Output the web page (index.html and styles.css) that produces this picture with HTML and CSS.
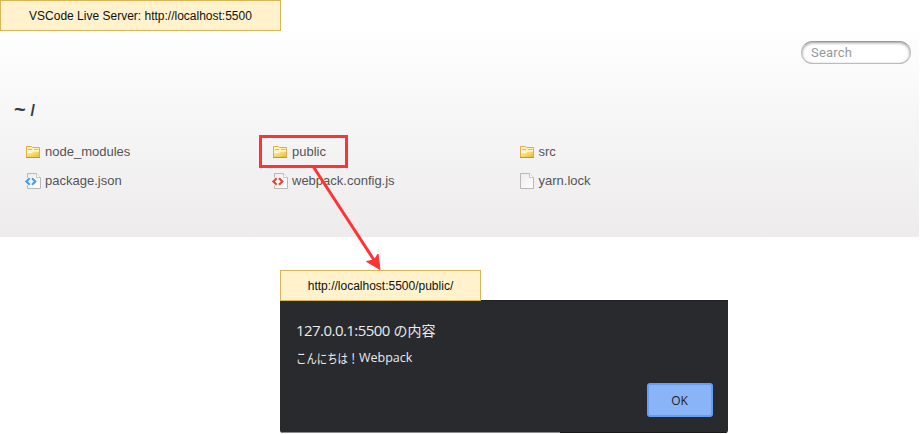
FILE: index.html
```
<!DOCTYPE html>
<html lang="ja">
<head>
<meta charset="utf-8">
<title>Live Server</title>
<link rel="stylesheet" href="styles.css">
</head>
<body>
<svg class="defs" width="0" height="0" aria-hidden="true">
  <defs>
    <linearGradient id="gold" x1="0" y1="0" x2="1" y2="1"><stop offset="0" stop-color="#fff3a8"/><stop offset="1" stop-color="#edbc35"/></linearGradient>
    <linearGradient id="paper" x1="0" y1="0" x2="1" y2="1"><stop offset="0" stop-color="#ececec"/><stop offset="1" stop-color="#ffffff"/></linearGradient>
    <symbol id="folder" viewBox="0 0 16 16">
      <path d="M1.5 13.5v-11h5l1 1h7v10z" fill="#fff4b5" stroke="#e0ad4c"/>
      <path d="M3 5.5h4M9 5.5h4.5" stroke="#e4ba55"/>
      <path d="M2 13V8.5h5L8.500 7H14v6z" fill="url(#gold)"/>
      <path d="M2 8.500h5l1.5-1.5H14" fill="none" stroke="#fffbd8"/>
      <path d="M1 13.5h14" stroke="#c9932f"/>
    </symbol>
    <symbol id="file" viewBox="0 0 16 16">
      <path d="M1.500.5H10.500l4 4v11h-13z" fill="url(#paper)" stroke="#b8b8b8" stroke-linejoin="round"/>
      <path d="M10.500.5v4h4" fill="#fff" stroke="#c5c5c5"/>
    </symbol>
    <symbol id="code" viewBox="0 0 16 16">
      <path d="M2.5.5H11.500l4 4v11h-13z" fill="url(#paper)" stroke="#b8b8b8" stroke-linejoin="round"/>
      <path d="M11.500.5v4h4" fill="#fff" stroke="#c5c5c5"/>
      <path d="M4.700 5L1.200 8.500l3.500 3.500M7 5l3.500 3.500L7 12" fill="none" stroke="#fff" stroke-width="3.6"/>
      <path d="M4.700 5.200L1.400 8.500l3.300 3.300M7 5.200l3.300 3.300L7 11.800" fill="none" stroke="currentColor" stroke-width="2.2"/>
    </symbol>
  </defs>
</svg>
<main class="listing">
  <div class="note note-server">VSCode Live Server: http://localhost:5500</div>
  <input class="search" type="text" placeholder="Search" aria-label="Search">
  <h1 class="path"><span class="tilde">~</span> /</h1>
  <ul class="files">
    <li><svg class="icon"><use href="#folder"/></svg>node_modules</li>
    <li><svg class="icon"><use href="#folder"/></svg>public</li>
    <li><svg class="icon"><use href="#folder"/></svg>src</li>
    <li><svg class="icon blue"><use href="#code"/></svg>package.json</li>
    <li><svg class="icon red"><use href="#code"/></svg>webpack.config.js</li>
    <li><svg class="icon"><use href="#file"/></svg>yarn.lock</li>
  </ul>
</main>
<section class="result">
  <div class="note note-public">http://localhost:5500/public/</div>
  <div class="dialog">
    <h2 class="origin"><span class="host">127.0.0.1:5500</span> <span class="ja">の内容</span></h2>
    <p class="message"><span class="kana">こんにちは！</span><span>Webpack</span></p>
    <button class="ok">OK</button>
  </div>
</section>
<svg class="annotation" width="920" height="434" aria-hidden="true">
  <rect x="260.5" y="136.5" width="86" height="30" fill="none" stroke="#f33" stroke-width="3"/>
  <path d="M313.5 167L374 260" stroke="#f33" stroke-width="3"/>
  <path d="M380 269.5L366.5 261.5L374 260L378 254Z" fill="#f33" stroke="#f33"/>
</svg>
</body>
</html>
```
FILE: styles.css
```
* { box-sizing: border-box; }
body {
  margin: 0;
  width: 920px;
  height: 434px;
  overflow: hidden;
  position: relative;
  background: #fff;
  font-family: "Liberation Sans", sans-serif;
}
.defs { position: absolute; }
.listing {
  width: 919px;
  height: 237px;
  display: flex;
  flex-direction: column;
  background: linear-gradient(#fff 25px, #edebec 237px);
  color: #555;
}
.note {
  height: 31px;
  padding-top: 1px;
  border: 1px solid #d6b656;
  background: #fff2cc;
  color: #111;
  font-size: 12px;
  line-height: 29px;
  text-align: center;
}
.note-server { width: 281px; }
.note-public { width: 201px; position: relative; }
.search {
  align-self: flex-end;
  width: 110px;
  height: 23px;
  margin: 10px 8px 0 0;
  padding: 0 9px;
  border: 1px solid #bbb;
  border-top-color: #999;
  border-radius: 12px;
  background: #fff;
  box-shadow: inset 0 1px 3px rgba(0, 0, 0, .4);
  font: 13px Roboto, sans-serif;
  letter-spacing: .2px;
}
.search::placeholder { color: #999; opacity: 1; }
.path {
  margin: 37px 0 0 14px;
  font-size: 16px;
  line-height: 20px;
  color: #343a45;
}
.tilde { display: inline-block; width: 12px; font-size: 20px; line-height: 16px; }
.files {
  margin: 16px 0 0 25px;
  padding: 0;
  list-style: none;
  display: grid;
  grid-template-columns: repeat(3, 247px);
  grid-auto-rows: 29px;
  font-size: 13px;
}
.files li {
  display: flex;
  align-items: center;
  height: 29px;
  gap: 4px;
}
.icon { width: 16px; height: 16px; flex: none; }
.files li:nth-child(3n) .icon { margin-right: -.5px; }
.blue { color: #4b9be5; }
.red { color: #e2463f; }
.result { width: 448px; margin: 33px 0 0 280px; }
.dialog {
  height: 133px;
  margin-top: -1px;
  padding: 19px 15px 0 16px;
  display: flex;
  flex-direction: column;
  background:
    linear-gradient(90deg, #8b8b8b 280px, #17181a 280px) bottom / 100% 1px no-repeat,
    #292a2d;
  border-top: 1px solid #202124;
  border-radius: 0 0 3px 3px;
  color: #e8eaed;
  font-family: "Open Sans", "Noto Sans CJK JP", sans-serif;
}
.origin { margin: 0; height: 20px; font-weight: 400; font-size: 14px; line-height: 20px; white-space: nowrap; }
.host { font-size: 15px; letter-spacing: -.55px; }
.message { margin: 9px 0 0; height: 18px; font-size: 12.5px; line-height: 18px; display: flex; }
.kana {
  width: 63px;
  font-size: 13px;
  white-space: nowrap;
  transform: scaleX(.8);
  transform-origin: left;
}
.ok {
  align-self: flex-end;
  width: 66px;
  height: 34px;
  margin-top: 16px;
  padding: 0 1px 0 0;
  border: 2px solid #669df6;
  border-radius: 3px;
  background: #8ab4f8;
  color: #202124;
  font: 12px "Open Sans", sans-serif;
}
.annotation { position: absolute; left: 0; top: 0; }
```
